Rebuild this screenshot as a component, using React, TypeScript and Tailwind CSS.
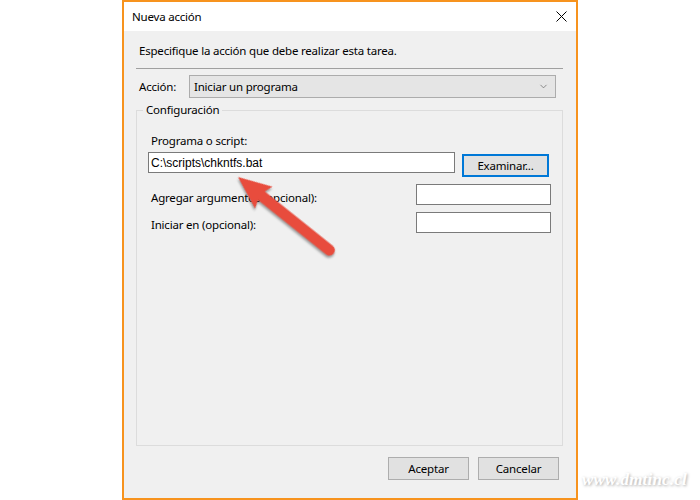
import { ChevronDown } from "lucide-react";

const ui = { fontFamily: '"Noto Sans", "Liberation Sans", sans-serif' };

function TextBox({ value, className }: { value?: string; className: string }) {
  return (
    <div
      className={`h-[21px] bg-white border border-[#7a7a7a] flex items-center pl-[2px] text-[12px] tracking-normal text-black ${className}`}
      style={{ fontFamily: '"Liberation Sans", Arial, sans-serif' }}
    >
      {value}
    </div>
  );
}

function Button({ label, focused, className }: { label: string; focused?: boolean; className: string }) {
  return (
    <div
      className={`h-[23px] flex items-center justify-center bg-[#e1e1e1] text-black ${
        focused ? "border-2 border-[#0078d7]" : "border border-[#adadad]"
      } ${className}`}
    >
      {label}
    </div>
  );
}

export default function App() {
  return (
    <div className="relative w-[700px] h-[500px] bg-white flex overflow-hidden" style={ui}>
      {/* ventana del diálogo */}
      <div className="ml-[122px] w-[456px] h-[500px] border-2 border-[#f7931e] flex flex-col text-[11.5px] tracking-[-0.2px]">
        <div className="h-[29px] bg-white flex items-center justify-between pl-[8px] pr-[9px] shrink-0">
          <span className="text-black">Nueva acción</span>
          <svg width="11" height="11" viewBox="0 0 11 11">
            <path d="M0.5 0.5 L10.5 10.5 M10.5 0.5 L0.5 10.5" stroke="#000" strokeWidth="1" />
          </svg>
        </div>

        <div className="flex-1 bg-[#f0f0f0] pl-[12px] pr-[13px] flex flex-col text-black">
          <p className="mt-[12px] ml-[3px] leading-[16px]">Especifique la acción que debe realizar esta tarea.</p>
          <div className="mt-[9px] h-px bg-[#a0a0a0]" />

          <div className="mt-[6px] flex items-center pl-[3px] mr-[7px]">
            <span className="w-[50px] leading-[16px]">Acción:</span>
            <div className="flex-1 h-[23px] bg-[#e5e5e5] border border-[#acacac] flex items-center justify-between pl-[4px] pr-[6px]">
              <span>Iniciar un programa</span>
              <ChevronDown className="w-[11px] h-[11px] text-[#606060]" strokeWidth={1.5} />
            </div>
          </div>

          <fieldset className="mt-[4px] h-[344px] border border-[#dcdcdc]">
            <legend className="ml-[6px] px-[3px] leading-[16px]">Configuración</legend>

            <div className="pl-[11px]">
              <p className="mt-[15px] ml-[3px] leading-[16px]">Programa o script:</p>
              <div className="mt-[3px] flex items-start">
                <TextBox value="C:\scripts\chkntfs.bat" className="w-[307px]" />
                <Button label="Examinar..." focused className="ml-[7px] mt-[2px] w-[87px]" />
              </div>

              <div className="mt-[7px] flex items-start">
                <span className="w-[268px] pl-[3px] mt-[6px] leading-[16px]">Agregar argumentos (opcional):</span>
                <TextBox className="w-[135px]" />
              </div>
              <div className="mt-[6px] flex items-start">
                <span className="w-[268px] pl-[3px] mt-[5px] leading-[16px]">Iniciar en (opcional):</span>
                <TextBox className="w-[135px]" />
              </div>
            </div>
          </fieldset>

          <div className="mt-[11px] mr-[4px] flex justify-end gap-[9px]">
            <Button label="Aceptar" className="w-[81px]" />
            <Button label="Cancelar" className="w-[81px]" />
          </div>
        </div>
      </div>

      {/* marca de agua */}
      <div className="flex-1 flex flex-col justify-end pb-[11px] pl-[4px]">
        <span
          className="text-[17px] font-bold italic text-white leading-[18px] tracking-[0.2px] [text-shadow:1px_1px_3px_rgba(0,0,0,0.35)]"
          style={{ fontFamily: '"Liberation Serif", serif' }}
        >
          www.dmtinc.cl
        </span>
      </div>

      {/* flecha roja */}
      <svg className="absolute left-0 top-0 pointer-events-none" width="700" height="500">
        <g
          transform="translate(238 177) rotate(38.66)"
          style={{ filter: "drop-shadow(1px 2px 1px rgba(0,0,0,0.35))" }}
        >
          <path
            d="M0 0 L33 -14 L30 -5.5 L117 -5.5 A5.5 5.5 0 0 1 117 5.5 L30 5.5 L33 14 Z"
            fill="#e84c3d"
          />
        </g>
      </svg>
    </div>
  );
}
